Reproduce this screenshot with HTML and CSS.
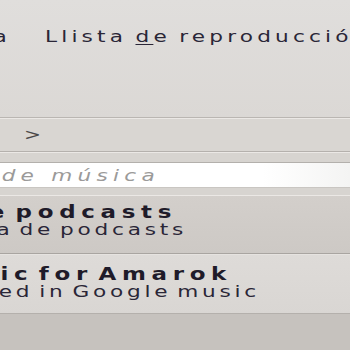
FILE: index.html
```html
<!DOCTYPE html>
<html lang="ca">
<head>
    <meta charset="UTF-8">
    <title>Amarok</title>
    <link rel="stylesheet" href="styles.css">
</head>
<body>
<div class="tabs">
    <div class="prev-tab">Fonts de mèdia</div>
    <div class="tab">Llista <u>d</u>e reproducció</div>
</div>

<div class="crumbs"><span class="arrow">&gt;</span></div>

<div class="search">
    <div class="field">
        <div class="placeholder">Cerca a la col·lecció de música</div>
    </div>
</div>

<div class="list">
    <div class="item first">
        <div class="title tail w-title1">Directori de podcasts</div>
        <div class="subtitle tail w-sub1">Una llista de podcasts</div>
    </div>
    <div class="item second">
        <div class="title tail w-title2">Google Music for Amarok</div>
        <div class="subtitle tail w-sub2">Music stored in Google music</div>
    </div>
</div>
</body>
</html>
```

FILE: styles.css
```css
body {
    margin: 0;
    width: 350px;
    height: 350px;
    overflow: hidden;
    background-color: #c6c2be;
    font-family: "DejaVu Sans", sans-serif;
    color: #2a2637;
}
/* the screenshot is stretched sideways, so text is widened with scaleX */
.tabs {
    display: flex;
    height: 90px;
    padding-top: 27px;
    background: linear-gradient(#e0dedc, #dbd8d5);
    border-bottom: 1px solid #bab6b2;
    font-size: 16px;
    line-height: 19px;
    letter-spacing: 3.1px;
    white-space: nowrap;
}
.prev-tab {
    width: 11px;
    flex-shrink: 0;
    direction: rtl;
    transform: scaleX(1.35);
    transform-origin: right;
}
.tab {
    margin-left: 34px;
    word-spacing: -2px;
    transform: scaleX(1.35);
    transform-origin: left;
}
.tab u {
    text-decoration-thickness: 1px;
    text-underline-offset: 2px;
}
.crumbs {
    display: flex;
    align-items: center;
    height: 32px;
    padding-left: 24px;
    background-color: #d9d6d2;
    border-top: 1px solid #ebe8e5;
    border-bottom: 1px solid #b5b1ad;
    font-size: 15px;
    color: #4a4848;
}
.arrow {
    transform: scaleX(1.35);
    transform-origin: left;
}
.search {
    padding: 9px 0 7px;
    background-color: #d7d4d0;
    border-top: 1px solid #ebe8e5;
}
.field {
    display: flex;
    align-items: center;
    height: 24px;
    background: linear-gradient(90deg, #ffffff 75%, #f4f4f3);
    border-top: 1px solid #b3b0ac;
    border-bottom: 1px solid #c9c6c2;
}
.placeholder {
    width: 160px;
    direction: rtl;
    white-space: nowrap;
    flex-shrink: 0;
    font-size: 16px;
    font-style: italic;
    letter-spacing: 3.9px;
    color: #9b9a99;
    transform: scaleX(1.35);
    transform-origin: right;
}
.list {
    border-top: 1px solid #ebe8e5;
}
.item {
    height: 50px;
    padding-top: 7px;
}
.item.first {
    background: linear-gradient(#d3cfcb, #cdc9c5);
    border-bottom: 1px solid #a9a5a1;
}
.item.second {
    height: 48px;
    padding-top: 10px;
    background: linear-gradient(#dedbd8, #d9d6d3);
    border-top: 1px solid #e6e3e0;
    border-bottom: 1px solid #b4b0ac;
}
.tail {
    direction: rtl;
    white-space: nowrap;
    transform: scaleX(1.35);
    transform-origin: right;
}
.title {
    font-size: 17px;
    line-height: 18px;
    font-weight: bold;
    letter-spacing: 4.2px;
    word-spacing: -6px;
    color: #1f1b29;
}
.subtitle {
    font-size: 16px;
    line-height: 17px;
    letter-spacing: 2.8px;
    word-spacing: -3.5px;
}
.w-title1 { width: 177px; }
.w-sub1 { width: 187px; }
.w-title2 { width: 232px; }
.w-sub2 { width: 260px; }
```
